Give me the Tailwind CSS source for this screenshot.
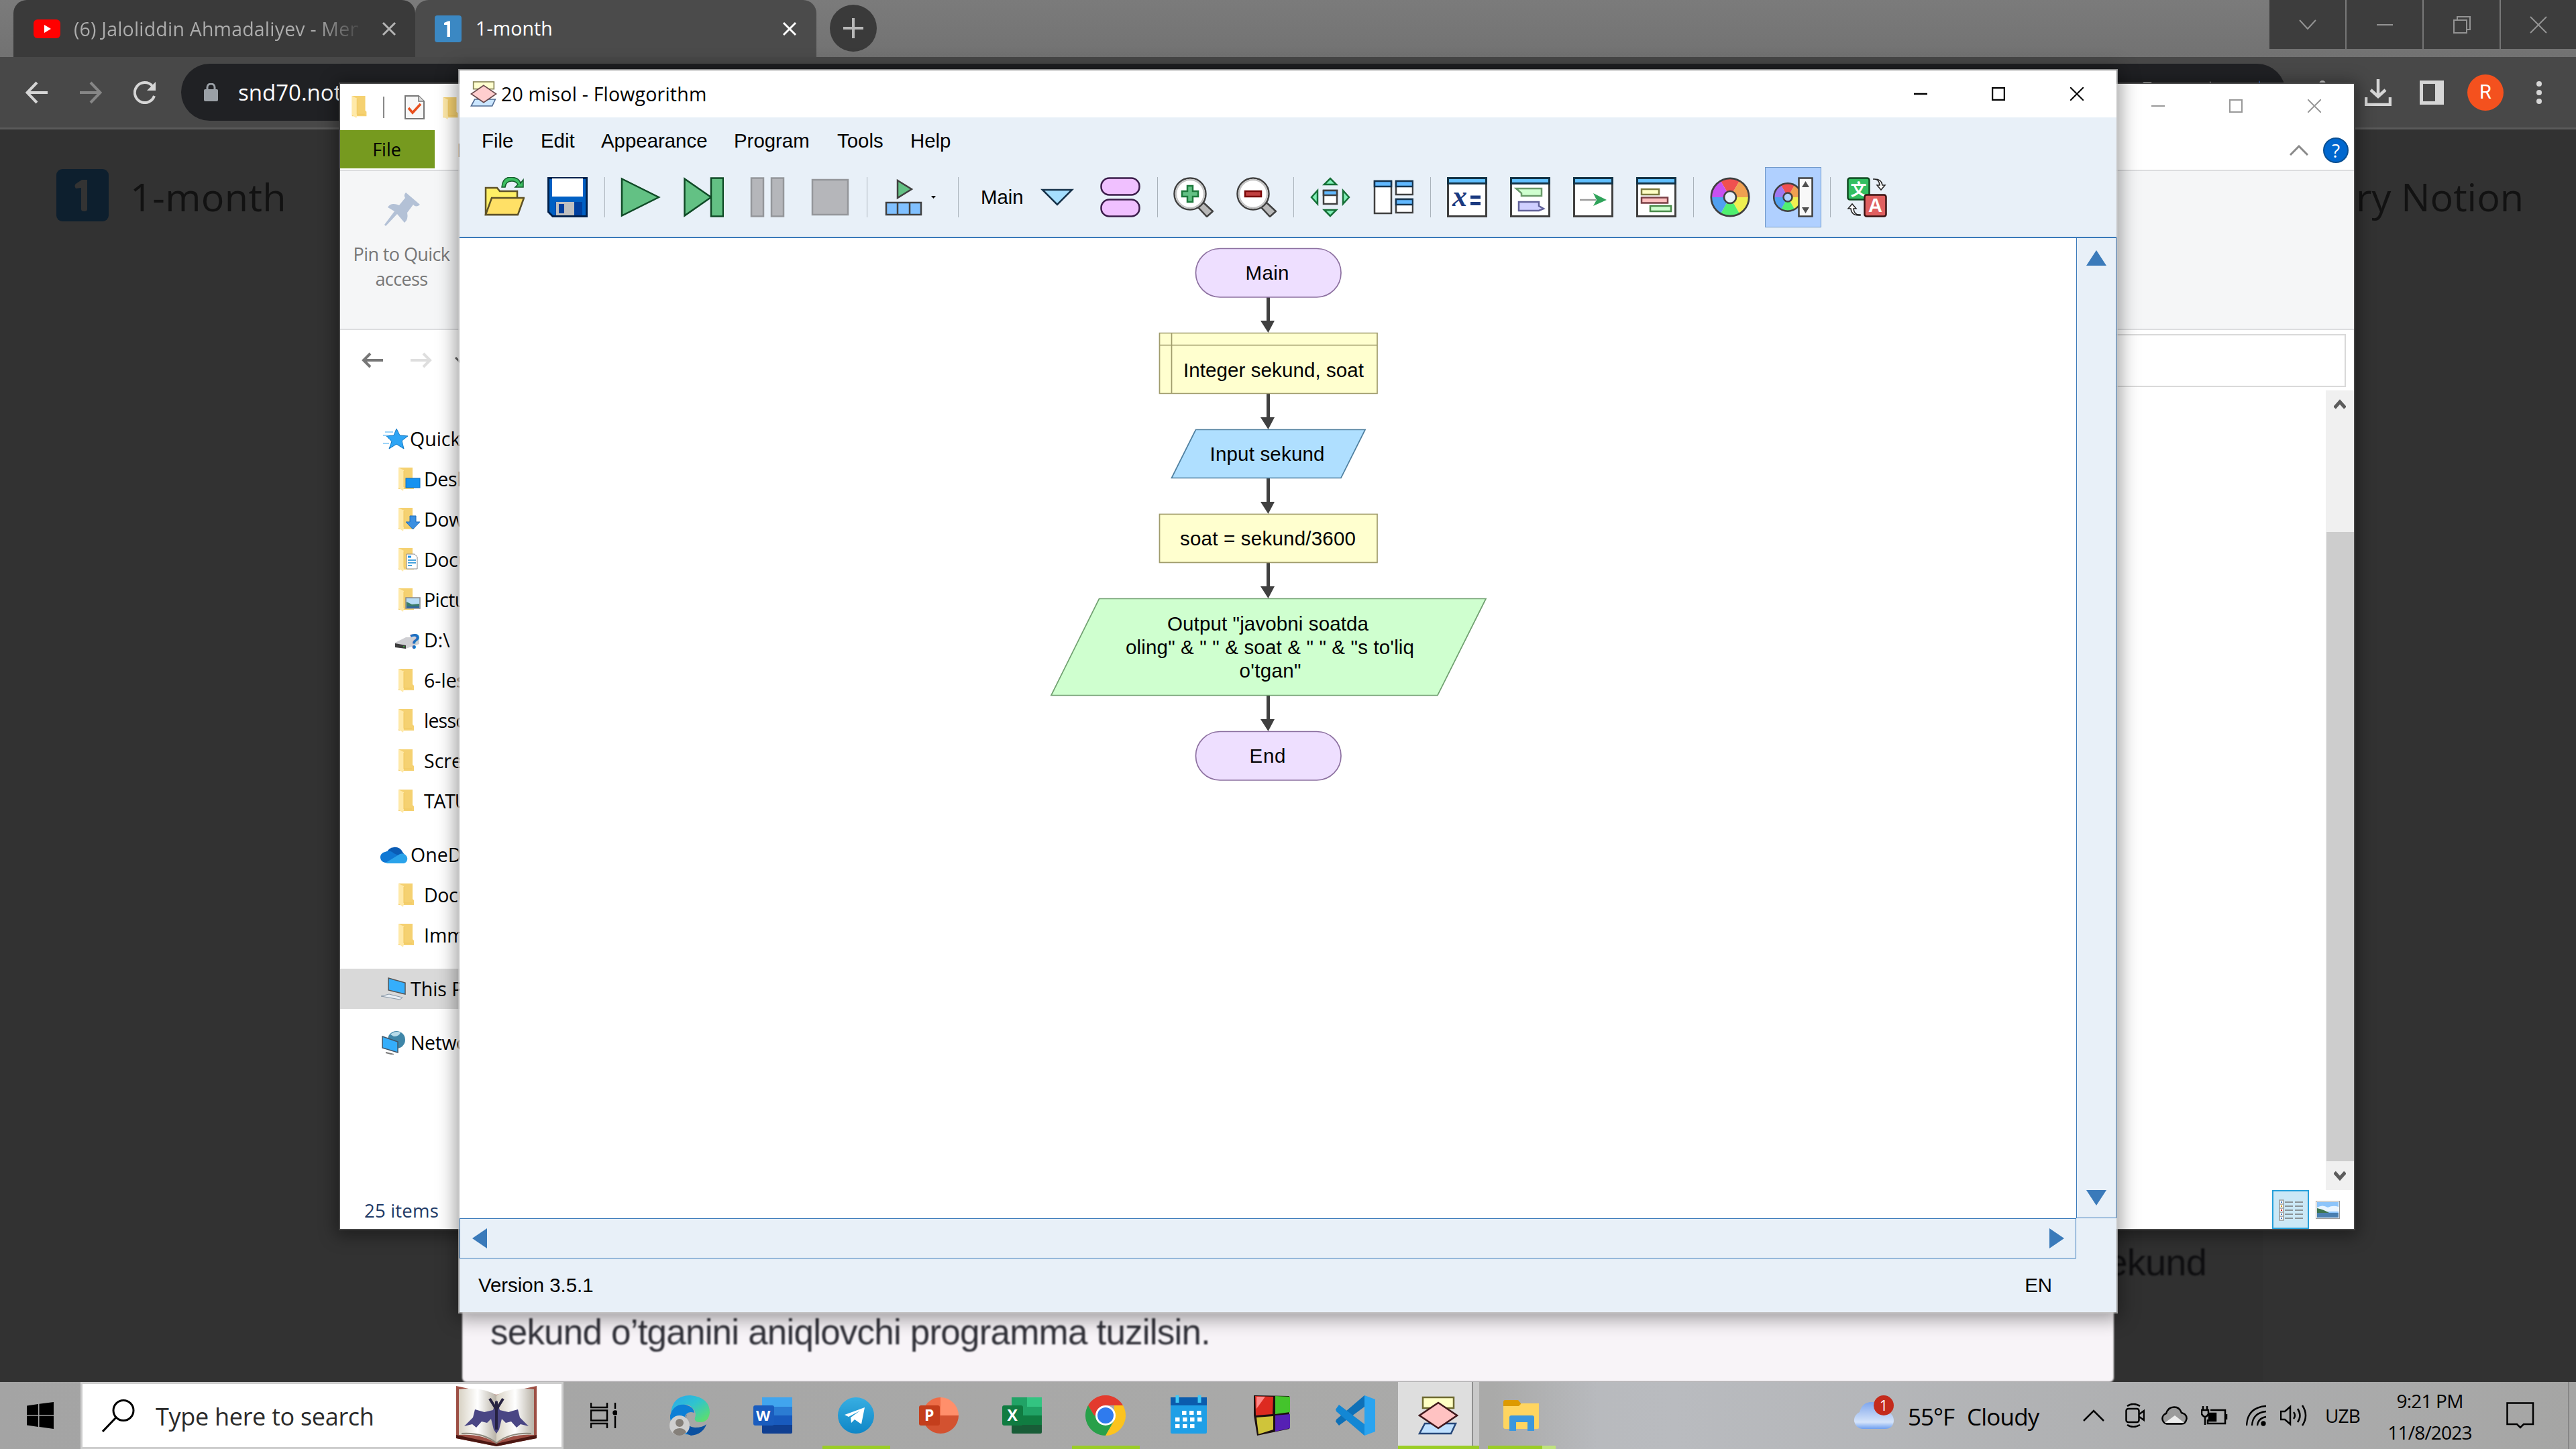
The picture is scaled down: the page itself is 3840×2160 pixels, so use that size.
<!DOCTYPE html>
<html lang="en">
<head>
<meta charset="utf-8">
<title>Desktop</title>
<script src="https://cdn.jsdelivr.net/npm/@tailwindcss/browser@4"></script>
</head>
<body class="relative h-[2160px] w-[3840px] overflow-hidden bg-[#323232] font-['Open_Sans',sans-serif] text-[28.5px] leading-none whitespace-nowrap text-black">

<svg width="0" height="0" class="absolute">
  <defs>
    <linearGradient id="gtg" x1="0" x2="0" y1="0" y2="1"><stop offset="0" stop-color="#37aee2"/><stop offset="1" stop-color="#0f86c6"/></linearGradient>
    <linearGradient id="gcloud" x1="0" x2="0" y1="0" y2="1"><stop offset="0" stop-color="#7ea6ee"/><stop offset=".35" stop-color="#a9c4f2"/><stop offset=".75" stop-color="#d5e4fa"/><stop offset="1" stop-color="#6e9ff0"/></linearGradient>
    <linearGradient id="gedge" x1="0" x2="1" y1="0" y2="1"><stop offset="0" stop-color="#2aa6ee"/><stop offset=".45" stop-color="#2fc3cf"/><stop offset="1" stop-color="#66e35a"/></linearGradient>
    <linearGradient id="gpage" x1="0" x2="1"><stop offset="0" stop-color="#d8d2c4"/><stop offset=".5" stop-color="#ffffff"/><stop offset="1" stop-color="#b8b2a6"/></linearGradient>
    <symbol id="folder" viewBox="0 0 24 36"><path d="M0 1H21V24L23 26V33H0Z" fill="#f5d171"/><path d="M0 1L8 5V31L7 36L0 31Z" fill="#ffe9a8"/><path d="M8 6V30H20" fill="none" stroke="#f0c75f" stroke-width="1"/></symbol>
    <symbol id="flow" viewBox="0 0 60 60"><rect x="7" y="3" width="46" height="16" fill="#ffffc4" stroke="#6e6a30" stroke-width="2.5"/><path d="M10 42H56L49 57H2Z" fill="#bfe0ff" stroke="#27487a" stroke-width="2.5"/><path d="M30 11L58 30L30 49L2 30Z" fill="#ffc2c2" stroke="#40181c" stroke-width="2.5"/></symbol>
    <symbol id="winframe" viewBox="0 0 60 60"><rect x="1.5" y="1.5" width="57" height="57" fill="#fff" stroke="#404040" stroke-width="3"/><rect x="1.5" y="1.5" width="57" height="8" fill="#61c0ff" stroke="#123246" stroke-width="3"/></symbol>
  </defs>
</svg>

<!-- Browser -->
<div class="absolute inset-x-0 top-0 flex h-[2060px] flex-col">
  <div class="flex h-[85px] bg-gradient-to-b from-[#7b7b7b] to-[#727272] pl-5">
    <div class="flex h-[85px] w-[599px] items-center rounded-t-[20px] bg-[#3a3a3a] pl-[30px]">
      <svg class="h-[28px] w-[40px]" viewBox="0 0 40 28"><rect width="40" height="28" rx="6" fill="#f00"/><path d="M16 8L26 14L16 20Z" fill="#fff"/></svg>
      <div class="ml-5 w-[424px] overflow-hidden bg-gradient-to-r from-[#adadad] from-85% to-[#4a4a4a] bg-clip-text leading-[44px] tracking-[0.2px] text-transparent">(6) Jaloliddin Ahmadaliyev - Mentor</div>
      <svg class="ml-[35px] size-[22px]" viewBox="0 0 22 22" stroke="#b4b4b4" stroke-width="3"><path d="M2 2L20 20M20 2L2 20"/></svg>
    </div>
    <div class="flex h-[85px] w-[598px] items-center rounded-t-[20px] bg-[#4b4b4b] pl-[29px] text-white">
      <svg class="size-[40px]" viewBox="0 0 40 40"><rect width="40" height="40" rx="4" fill="#3b88c3"/><path d="M14 11L20 8.500H23V32H18.500V14H14Z" fill="#fff"/></svg>
      <div class="ml-[21px] w-[457px] tracking-[0.1px]">1-month</div>
      <svg class="size-[22px]" viewBox="0 0 22 22" stroke="#fff" stroke-width="3"><path d="M2 2L20 20M20 2L2 20"/></svg>
    </div>
    <svg class="mt-[7px] ml-5 size-[70px]" viewBox="0 0 70 70"><circle cx="35" cy="35" r="35" fill="#3a3a3a"/><path d="M35 20V50M20 35H50" stroke="#b8b8b8" stroke-width="4"/></svg>
    <div class="ml-auto flex h-[73px] gap-[2px]">
      <div class="flex w-[113px] items-center justify-center bg-[#3d3d3d]"><svg class="size-[26px]" viewBox="0 0 26 26" fill="none" stroke="#949494" stroke-width="2"><path d="M1 6L13 19L25 6"/></svg></div>
      <div class="flex w-[113px] items-center justify-center bg-[#3d3d3d]"><svg class="size-[26px]" viewBox="0 0 26 26" fill="none" stroke="#949494" stroke-width="2"><path d="M1 13H25"/></svg></div>
      <div class="flex w-[113px] items-center justify-center bg-[#3d3d3d]"><svg class="size-[26px]" viewBox="0 0 26 26" fill="none" stroke="#949494" stroke-width="2"><path d="M1 6H20V25H1ZM6 6V1H25V20H20"/></svg></div>
      <div class="flex w-[112px] items-center justify-center bg-[#3d3d3d]"><svg class="size-[26px]" viewBox="0 0 26 26" fill="none" stroke="#949494" stroke-width="2"><path d="M1 1L25 25M25 1L1 25"/></svg></div>
    </div>
  </div>
  <div class="flex h-[108px] items-center border-b-[3px] border-[#5a5a5a] bg-[#484848] pl-[38px]">
    <svg class="size-[34px]" viewBox="0 0 34 34" fill="none" stroke="#d6d6d6" stroke-width="4"><path d="M33 17H3M17 2L2.500 17L17 32"/></svg>
    <svg class="ml-[46px] size-[34px]" viewBox="0 0 34 34" fill="none" stroke="#868686" stroke-width="4"><path d="M1 17H31M17 2L31.500 17L17 32"/></svg>
    <svg class="ml-[47px] size-[34px]" viewBox="0 0 34 34"><path d="M28 7A15 15 0 1 0 31 22" fill="none" stroke="#d6d6d6" stroke-width="4"/><path d="M33 1V14H20Z" fill="#d6d6d6"/></svg>
    <div class="ml-[37px] flex h-[85px] w-[3137px] items-center rounded-full bg-[#202124] pl-[34px]">
      <svg class="h-[27px] w-[21px]" viewBox="0 0 21 27"><rect y="9" width="21" height="18" rx="2" fill="#9aa0a6"/><path d="M5 10V6A5.500 5 0 0 1 16 6V10" fill="none" stroke="#9aa0a6" stroke-width="3"/></svg>
      <div class="ml-[30px] w-[2837px] text-[33px] text-white">snd70.notion.site</div>
      <svg class="size-[32px]" viewBox="0 0 32 32" fill="none" stroke="#ccc" stroke-width="5"><circle cx="9" cy="9" r="8"/></svg>
      <svg class="ml-[50px] size-[34px]" viewBox="0 0 34 34" fill="#ccc"><path d="M20 0L30 10L20 18Z"/></svg>
      <svg class="ml-[46px] size-[36px]" viewBox="0 0 36 36" fill="#3b78e7"><path d="M14 0L18 12H30L20 19L24 32L14 24L4 32L8 19L0 12H10Z"/></svg>
    </div>
    <svg class="ml-[42px] size-[36px]" viewBox="0 0 36 36" fill="#ccc"><circle cx="13" cy="5" r="5"/><rect x="0" y="6" width="30" height="28"/></svg>
    <svg class="ml-[40px] h-[40px] w-[40px]" viewBox="0 0 40 40" fill="none" stroke="#d6d6d6" stroke-width="4.500"><path d="M20 0V25M9 16L20 26L31 16M2 27V38H38V27"/></svg>
    <svg class="ml-[42px] h-[36px] w-[36px]" viewBox="0 0 36 36" fill="#d6d6d6"><path d="M0 0H36V36H0ZM5 5V31H23V5Z" fill-rule="evenodd"/></svg>
    <div class="ml-[35px] flex size-[54px] items-center justify-center rounded-full bg-[#f4511e] font-['Roboto',sans-serif] text-[29px] text-white">R</div>
    <svg class="ml-[49px] h-[34px] w-[8px]" viewBox="0 0 8 34" fill="#d6d6d6"><circle cx="4" cy="4" r="4"/><circle cx="4" cy="17" r="4"/><circle cx="4" cy="30" r="4"/></svg>
  </div>
  <div class="flex h-[202px] items-center pr-[78px] pl-[84px] text-[57.5px] text-[#121212]">
    <svg class="mb-[6px] size-[78px]" viewBox="0 0 78 78"><rect width="78" height="78" rx="9" fill="#0d1f2e"/><path d="M29 22L38 16H46V60Q46 63 41.500 63Q37 63 37 60V28L29 29Q26 25 29 22Z" fill="#333"/></svg>
    <div class="ml-[32px] tracking-[0.4px]">1-month</div>
    <div class="ml-auto">ry Notion</div>
  </div>
  <div class="mt-auto flex h-[240px] font-['Liberation_Sans',sans-serif]">
    <div class="ml-[689px] w-[2462px] rounded-b-[6px] bg-[#f8f4f8] pt-[136px] pl-[42px] text-[53px] leading-[60px] tracking-[-0.8px] text-[#303038] blur-[0.8px]">sekund o’tganini aniqlovchi programma tuzilsin.</div>
    <div class="flex w-[222px] items-start justify-end bg-[#303030] pt-[34px]"><div class="mr-[84px] text-[56px] leading-[56px] tracking-[-0.8px] text-[#0e0e10] blur-[1px]">ekund</div></div>
  </div>
</div>

<!-- File Explorer window -->
<div class="absolute top-[125px] left-[507px] flex h-[1707px] w-[3002px] flex-col bg-white shadow-[0_0_0_2px_#454545,0_4px_24px_6px_#00000066]">
  <div class="flex h-[69px] items-center">
    <svg class="mb-[2px] ml-[17px] h-[34px] w-[24px]"><use href="#folder"/></svg>
    <div class="ml-[23px] h-[32px] w-[2px] bg-[#888]"></div>
    <svg class="ml-[30px] h-[36px] w-[30px]" viewBox="0 0 30 36"><path d="M1 1H21L29 9V35H1Z" fill="#f7f7f7" stroke="#777" stroke-width="2"/><path d="M21 1V9H29" fill="#ddd" stroke="#777" stroke-width="1.500"/><path d="M6 19L12 26L24 13" fill="none" stroke="#e84e1c" stroke-width="3.500"/></svg>
    <svg class="mt-[2px] ml-[27px] h-[34px] w-[24px]"><use href="#folder"/></svg>
    <div class="mb-[3px] ml-auto flex">
      <div class="flex w-[116px] justify-center"><svg class="size-[20px]" viewBox="0 0 20 20" stroke="#999" stroke-width="2"><path d="M0 10H20"/></svg></div>
      <div class="flex w-[116px] justify-center"><svg class="size-[20px]" viewBox="0 0 20 20" fill="none" stroke="#999" stroke-width="2"><path d="M1 1H19V19H1Z"/></svg></div>
      <div class="flex w-[118px] justify-center"><svg class="size-[20px]" viewBox="0 0 20 20" stroke="#999" stroke-width="2"><path d="M0 0L20 20M20 0L0 20"/></svg></div>
    </div>
  </div>
  <div class="flex h-[59px] items-center">
    <div class="flex h-[57px] w-[141px] items-center justify-center self-start bg-[#769a1f] pr-[2px] text-[27px]">File</div>
    <div class="ml-[33px] text-[27px]">H</div>
    <svg class="mr-[22px] ml-auto h-[16px] w-[28px]" viewBox="0 0 28 16" fill="none" stroke="#8a8a8a" stroke-width="3"><path d="M1 15L14 2L27 15"/></svg>
    <div class="mr-[8px] flex size-[38px] items-center justify-center rounded-full border-2 border-[#0a4f92] bg-[#0067cf] text-[28px] text-white">?</div>
  </div>
  <div class="h-[239px] border-y-2 border-[#dcdddf] bg-[#f5f6f7] pt-[31px]">
    <div class="flex w-[185px] flex-col items-center text-[27px] text-[#777]">
      <svg class="h-[52px] w-[54px]" viewBox="0 0 54 52" fill="#b3c1d6"><path d="M32 1L53 19Q47 24 43 19L34 31Q36 41 30 46L19 33L2 51L0 49L15 29L5 23Q10 15 22 20L31 9Q28 5 32 1Z"/></svg>
      <div class="mt-[22px] mr-[2px] text-center leading-[37px] tracking-[-0.6px]">Pin to Quick<br>access</div>
    </div>
  </div>
  <div class="flex h-[90px] items-center">
    <svg class="ml-[32px] h-[24px] w-[32px]" viewBox="0 0 32 24" fill="none" stroke="#777" stroke-width="4"><path d="M32 12H3M13 2L3 12L13 22"/></svg>
    <svg class="ml-[41px] h-[24px] w-[32px]" viewBox="0 0 32 24" fill="none" stroke="#dedede" stroke-width="4"><path d="M0 12H29M19 2L29 12L19 22"/></svg>
    <svg class="ml-[34px] h-[10px] w-[16px]" viewBox="0 0 16 10" fill="none" stroke="#666" stroke-width="3"><path d="M1 1L8 8L15 1"/></svg>
    <div class="mr-[12px] ml-[60px] h-[79px] flex-1 border-2 border-[#d9d9d9]"></div>
  </div>
  <div class="flex h-[1192px]">
    <div class="flex w-[300px] flex-col pt-[42px]">
      <div class="flex h-[60px] items-center pl-[64px]"><svg class="h-[32px] w-[38px]" viewBox="0 0 38 32"><path d="M20 1L25 11L37 12L28 19L31 31L20 24L9 31L13 20L5 12L16 11Z" fill="#2ea5f5" stroke="#1279c4"/><path d="M3 6H15M0 11H8M0 23H9" stroke="#7cc6f7" stroke-width="1.500"/></svg><span class="ml-[2px]">Quick access</span></div>
      <div class="flex h-[60px] items-center pl-[87px]"><svg class="h-[36px] w-[34px]" viewBox="0 0 34 36"><use href="#folder" width="24" height="36"/><rect x="11" y="17" width="21" height="14" fill="#1592f0" stroke="#0b6fc2"/></svg><span class="ml-1 tracking-[-0.4px]">Desktop</span></div>
      <div class="flex h-[60px] items-center pl-[87px]"><svg class="h-[36px] w-[34px]" viewBox="0 0 34 36"><use href="#folder" width="24" height="36"/><path d="M17 13H26V22H32L21.500 33L11 22H17Z" fill="#3b8fe0" stroke="#1f6dbb"/></svg><span class="ml-1 tracking-[-0.4px]">Downloads</span></div>
      <div class="flex h-[60px] items-center pl-[87px]"><svg class="h-[36px] w-[34px]" viewBox="0 0 34 36"><use href="#folder" width="24" height="36"/><path d="M12 10H24L28 14V32H12Z" fill="#fff" stroke="#888"/><path d="M14 19H26M14 23H26M14 27H20" stroke="#4aa3dc" stroke-width="2"/><path d="M14 14H19" stroke="#1592f0" stroke-width="3"/></svg><span class="ml-1 tracking-[-0.4px]">Documents</span></div>
      <div class="flex h-[60px] items-center pl-[87px]"><svg class="h-[36px] w-[34px]" viewBox="0 0 34 36"><use href="#folder" width="24" height="36"/><rect x="11" y="15" width="21" height="16" fill="#b7dcf6" stroke="#888" stroke-width="1.500"/><path d="M12 21L20 25L31 24V30H12Z" fill="#3c7d6a"/><path d="M12 28H31V30H12Z" fill="#2d64a0"/></svg><span class="ml-1 tracking-[-0.6px]">Pictures</span></div>
      <div class="flex h-[60px] items-center pl-[82px]"><svg class="h-[32px] w-[38px]" viewBox="0 0 38 32"><path d="M0 20L16 12H36V22L16 29L0 26Z" fill="#cfcfd3"/><path d="M0 21L16 24V29L0 27Z" fill="#3c3c3c"/><circle cx="13" cy="26" r="1" fill="#3c3"/><text x="22" y="29" font-size="30" font-weight="700" fill="#1d6fc0">?</text></svg><span class="ml-[5px]">D:\</span></div>
      <div class="flex h-[60px] items-center pl-[87px]"><svg class="h-[36px] w-[24px]"><use href="#folder"/></svg><span class="ml-[14px]">6-lesson</span></div>
      <div class="flex h-[60px] items-center pl-[87px]"><svg class="h-[36px] w-[24px]"><use href="#folder"/></svg><span class="ml-[14px] tracking-[-0.8px]">lessons</span></div>
      <div class="flex h-[60px] items-center pl-[87px]"><svg class="h-[36px] w-[24px]"><use href="#folder"/></svg><span class="ml-[14px]">Screenshots</span></div>
      <div class="flex h-[60px] items-center pl-[87px]"><svg class="h-[36px] w-[24px]"><use href="#folder"/></svg><span class="ml-[14px] tracking-[-1.2px]">TATU</span></div>
      <div class="mt-5 flex h-[60px] items-center pl-[60px]"><svg class="h-[28px] w-[41px]" viewBox="0 0 41 28"><path d="M9 12A13 13 0 0 1 33 10L36 14L20 22Z" fill="#0a5cb5"/><path d="M9 26A8 8 0 0 1 7 10Q14 6 20 12L33 18L30 26Z" fill="#0f78d4"/><path d="M8 26L26 15Q32 10 37 14Q41 17 40 22Q39 26 35 27H10Z" fill="#2aa3ea"/></svg><span class="ml-[4px]">OneDrive</span></div>
      <div class="flex h-[60px] items-center pl-[87px]"><svg class="h-[36px] w-[24px]"><use href="#folder"/></svg><span class="ml-[14px] tracking-[-0.4px]">Documents</span></div>
      <div class="flex h-[60px] items-center pl-[87px]"><svg class="h-[36px] w-[24px]"><use href="#folder"/></svg><span class="ml-[14px]">Immigration</span></div>
      <div class="mt-5 flex h-[60px] items-center bg-[#d9d9d9] pl-[61px]"><svg class="h-[34px] w-[38px]" viewBox="0 0 38 34"><path d="M11 1L36 8V25L11 19Z" fill="#35aefb" stroke="#555" stroke-width="1.500"/><path d="M0 28L12 25L32 30L28 33Z" fill="#e8eef4" stroke="#8796a5"/></svg><span class="ml-[6px]">This PC</span></div>
      <div class="mt-5 flex h-[60px] items-center pl-[62px]"><svg class="h-[36px] w-[36px]" viewBox="0 0 36 36"><circle cx="22" cy="14" r="13" fill="#3f86a8"/><path d="M13 6Q20 0 28 3Q26 9 18 9Z" fill="#b9dcea"/><path d="M1 9L24 17V33L1 26Z" fill="#35aefb" stroke="#456" stroke-width="1.500"/><path d="M6 33L18 36" stroke="#777" stroke-width="2"/></svg><span class="ml-[7px] tracking-[-0.4px]">Network</span></div>
    </div>
    <div class="ml-auto flex w-[42px] flex-col items-center justify-between bg-[#f0f0f0]">
      <svg class="mt-[12px] h-[16px] w-[18px]" viewBox="0 0 18 16" fill="none" stroke="#5c5c5c" stroke-width="5"><path d="M1 14L9 5L17 14"/></svg>
      <div class="mt-auto h-[938px] w-[41px] bg-[#cdcdcd]"></div>
      <svg class="mt-[14px] mb-[12px] h-[17px] w-[18px]" viewBox="0 0 18 16" fill="none" stroke="#5c5c5c" stroke-width="5"><path d="M1 2L9 11L17 2"/></svg>
    </div>
  </div>
  <div class="flex h-[58px] items-center pl-[36px] text-[#1e3a66]">
    <span class="mt-[3px] text-[27.5px] tracking-[0.2px]">25 items</span>
    <div class="ml-auto flex h-[58px] w-[55px] items-center justify-center border-2 border-[#26a0da] bg-[#cbe8f6]">
      <svg class="mt-[2px] h-[32px] w-[36px]" viewBox="0 0 36 32"><path d="M1 1H7V31H1ZM1 7H7M1 13H7M1 19H7M1 25H7" fill="#fff" stroke="#999" stroke-width="1.500"/><path d="M3 4H5M3 28H5M3 22H5" stroke="#3c7ac0" stroke-width="2"/><path d="M3 10H5" stroke="#c90" stroke-width="2"/><path d="M3 16H5" stroke="#c11" stroke-width="2"/><path d="M9 4H21M24 4H36M9 10H21M24 10H36M9 16H21M24 16H36M9 22H21M24 22H36M9 28H21M24 28H36" stroke="#777" stroke-width="1.300"/></svg>
    </div>
    <svg class="mr-[21px] ml-[10px] h-[27px] w-[36px]" viewBox="0 0 36 27"><rect x=".5" y=".5" width="35" height="26" fill="#fff" stroke="#999"/><rect x="2" y="2" width="32" height="23" fill="#8cc4fa"/><path d="M2 10Q10 5 18 10Q26 6 34 9V16H2Z" fill="#eaf5ff"/><path d="M2 11Q12 13 20 18H2Z" fill="#3d7550"/><path d="M2 18H34V25H2Z" fill="#4a7fb0"/></svg>
  </div>
</div>

<!-- Flowgorithm window -->
<div class="absolute top-[105px] left-[685px] flex h-[1851px] w-[2470px] flex-col bg-[#e8f0f8] font-['Liberation_Sans',sans-serif] text-[29.4px] shadow-[0_0_0_2px_#c8c8c8b0,0_4px_26px_6px_#00000060]">
  <div class="flex h-[70px] items-center bg-white font-['Open_Sans',sans-serif] text-[28.5px]">
    <svg class="ml-[16px] size-[40px] opacity-80"><use href="#flow"/></svg>
    <div class="ml-[6px] tracking-[0.2px]">20 misol - Flowgorithm</div>
    <div class="ml-auto flex">
      <div class="flex w-[116px] justify-center"><svg class="size-[20px]" viewBox="0 0 20 20" stroke="#000" stroke-width="2.500"><path d="M0 10H20"/></svg></div>
      <div class="flex w-[116px] justify-center"><svg class="size-[20px]" viewBox="0 0 20 20" fill="none" stroke="#000" stroke-width="2.500"><path d="M1 1H19V19H1Z"/></svg></div>
      <div class="flex w-[118px] justify-center"><svg class="size-[20px]" viewBox="0 0 20 20" stroke="#000" stroke-width="2"><path d="M0 0L20 20M20 0L0 20"/></svg></div>
    </div>
  </div>
  <div class="flex h-[70px] items-center pl-[33px]">
    <span class="w-[88px]">File</span><span class="w-[90px]">Edit</span><span class="w-[198px]">Appearance</span><span class="w-[154px]">Program</span><span class="w-[109px]">Tools</span><span>Help</span>
  </div>
  <div class="flex h-[110px] items-center border-b-2 border-[#3a7aba] pb-[10px] pl-[37px]">
    <svg class="size-[60px]" viewBox="0 0 60 60" stroke="#5e5228" stroke-width="2.500"><path d="M2 56V16H19L23 21H49V56Z" fill="#fff066"/><path d="M2 56L11 31H59L50 56Z" fill="#ffe066"/><path d="M26 15Q27 0 40 0Q52 1 54 9L58 4V15H46L50 11Q47 6 41 6Q32 6 31 15Z" fill="#3cbf62" stroke="#145c2c" stroke-width="1.500"/></svg>
    <svg class="ml-[34px] size-[60px]" viewBox="0 0 60 60"><path d="M1.500 1.500H58.500V58.500H8L1.500 52Z" fill="#0060c4" stroke="#00214d" stroke-width="3"/><rect x="7" y="2" width="46" height="27" fill="#fff"/><rect x="12" y="37" width="40" height="20" fill="#003f9f"/><rect x="13" y="37" width="27" height="20" fill="#c0c0c0"/><rect x="17" y="40" width="8" height="14" fill="#003f9f"/></svg>
    <div class="mr-[23px] ml-[25px] h-[60px] w-[1px] bg-[#a9b2ba]"></div>
    <svg class="size-[60px]" viewBox="0 0 60 60"><path d="M2 2.500L57 30L2 57.500Z" fill="#63c184" stroke="#0f4a26" stroke-width="2.500"/></svg>
    <svg class="ml-[34px] size-[60px]" viewBox="0 0 60 60" fill="#63c184" stroke="#0f4a26" stroke-width="2.500"><path d="M1.500 2.500L41 30L1.500 57.500Z"/><rect x="41" y="1.500" width="18" height="57"/></svg>
    <svg class="ml-[34px] size-[60px]" viewBox="0 0 60 60" fill="#b5b6ba" stroke="#94969a" stroke-width="2.500"><rect x="7" y="1.500" width="18" height="57"/><rect x="37" y="1.500" width="18" height="57"/></svg>
    <svg class="ml-[34px] size-[60px]" viewBox="0 0 60 60" fill="#b5b6ba" stroke="#94969a" stroke-width="2.500"><rect x="4" y="4" width="53" height="52"/></svg>
    <div class="mx-[25px] h-[60px] w-[1px] bg-[#a9b2ba]"></div>
    <svg class="size-[60px]" viewBox="0 0 60 60" stroke="#404040" stroke-width="2.500"><path d="M20 5L41 18L20 31Z" fill="#63c184"/><path d="M3 38H55V56H3ZM20 38V56M38 38V56" fill="#80c0ff"/></svg>
    <svg class="ml-[10px] h-[4px] w-[7px]" viewBox="0 0 7 4"><path d="M0 0H7L3.500 4Z"/></svg>
    <div class="ml-[33px] h-[60px] w-[1px] bg-[#a9b2ba]"></div>
    <span class="ml-[33px] w-[89px]">Main</span>
    <svg class="h-[27px] w-[50px]" viewBox="0 0 50 27"><path d="M3 2H47L25 24Z" fill="#a5dfff" stroke="#16324a" stroke-width="2.500"/></svg>
    <svg class="ml-[39px] size-[60px]" viewBox="0 0 60 60" fill="#f0c0ff" stroke="#3a1c4a" stroke-width="2.500"><rect x="1.500" y="1.500" width="57" height="25" rx="12"/><rect x="1.500" y="33.500" width="57" height="25" rx="12"/></svg>
    <div class="mr-[23px] ml-[25px] h-[60px] w-[1px] bg-[#a9b2ba]"></div>
    <svg class="size-[60px]" viewBox="0 0 60 60" stroke="#404040" stroke-width="2.500"><path d="M37 45L45 38L59 51L50 59Z" fill="#b8b8b8"/><circle cx="25" cy="25" r="23.500" fill="#fff"/><circle cx="25" cy="25" r="21" fill="none" stroke="#c4c4c4"/><path d="M21 13H29V21H37V29H29V37H21V29H13V21H21Z" fill="#63c184" stroke="#1d7a3c"/></svg>
    <svg class="ml-[34px] size-[60px]" viewBox="0 0 60 60" stroke="#404040" stroke-width="2.500"><path d="M37 45L45 38L59 51L50 59Z" fill="#b8b8b8"/><circle cx="25" cy="25" r="23.500" fill="#fff"/><circle cx="25" cy="25" r="21" fill="none" stroke="#c4c4c4"/><rect x="13" y="21" width="24" height="8" fill="#c04040" stroke="#7a0808"/></svg>
    <div class="mr-[24px] ml-[25px] h-[60px] w-[1px] bg-[#a9b2ba]"></div>
    <svg class="size-[60px]" viewBox="0 0 60 60" fill="#80f0b8" stroke="#177038" stroke-width="2.500"><path d="M30 2L39 11H21ZM30 58L21 49H39ZM2 30L11 20V40ZM58 30L49 20V40Z"/><rect x="20" y="20" width="20" height="20" fill="#fff" stroke="#404040"/><rect x="20" y="20" width="20" height="7" fill="#61b8ff" stroke="#404040"/></svg>
    <svg class="ml-[34px] size-[60px]" viewBox="0 0 60 60" fill="#fff" stroke="#404040" stroke-width="2.500"><path d="M2 6H27V54H2ZM34 6H59V26H34ZM34 33H59V53H34Z"/><path d="M2 6H27V14H2ZM34 6H59V14H34ZM34 33H59V41H34Z" fill="#61b8ff" stroke="#143450"/></svg>
    <div class="mr-[24px] ml-[25px] h-[60px] w-[1px] bg-[#a9b2ba]"></div>
    <svg class="size-[60px]" viewBox="0 0 60 60"><use href="#winframe"/><text x="8" y="43" font-family="Liberation Serif, serif" font-style="italic" font-weight="700" font-size="44" fill="#1b3a80">x</text><path d="M35 30H50M35 39.500H50" stroke="#1b3a80" stroke-width="5"/></svg>
    <svg class="ml-[34px] size-[60px]" viewBox="0 0 60 60"><use href="#winframe"/><path d="M8 19H46V30H16V26Z" fill="#cfffcf" stroke="#6a9a6a" stroke-width="2.500" transform="translate(1,-2)"/><path d="M13 37H43V43L50 47L43 50H13Z" fill="#cfcfff" stroke="#62629a" stroke-width="2.500"/></svg>
    <svg class="ml-[34px] size-[60px]" viewBox="0 0 60 60"><use href="#winframe"/><path d="M10 34H34" stroke="#9c9c9c" stroke-width="2.500"/><path d="M30 24L50 34L30 43L35 34Z" fill="#2fa35a"/></svg>
    <svg class="ml-[34px] size-[60px]" viewBox="0 0 60 60" stroke-width="2.500"><use href="#winframe"/><rect x="8" y="18" width="26" height="8" fill="#ffffc4" stroke="#7c7c40"/><rect x="8" y="30.500" width="39" height="8" fill="#ffc0c0" stroke="#7a4046"/><rect x="21" y="43" width="31" height="8" fill="#cfffcf" stroke="#4a8a4a"/></svg>
    <div class="mr-[24px] ml-[25px] h-[60px] w-[1px] bg-[#a9b2ba]"></div>
    <svg class="size-[60px]" viewBox="-30 -30 60 60"><path d="M0 0L-14 -24.200A28 28 0 0 1 14 -24.200Z" fill="#f05050"/><path d="M0 0L14 -24.200A28 28 0 0 1 28 0Z" fill="#f0a050"/><path d="M0 0H28A28 28 0 0 1 14 24.200Z" fill="#f0f050"/><path d="M0 0L14 24.200A28 28 0 0 1 -14 24.200Z" fill="#50f070"/><path d="M0 0L-14 24.200A28 28 0 0 1 -28 0Z" fill="#50a0f0"/><path d="M0 0H-28A28 28 0 0 1 -14 -24.200Z" fill="#c850f0"/><circle r="28.200" fill="none" stroke="#404040" stroke-width="2.700"/><circle r="9" fill="#e8f0f8" stroke="#404040" stroke-width="2.700"/></svg>
    <div class="ml-[22px] flex h-[90px] w-[84px] items-center justify-center border border-[#6f98c8] bg-[#b0d0ff]">
      <svg class="size-[60px]" viewBox="0 0 60 60"><g transform="translate(22,30)"><path d="M0 0L-10 -18A21 21 0 0 1 10 -18Z" fill="#f05050"/><path d="M0 0L10 -18A21 21 0 0 1 21 0Z" fill="#f0a050"/><path d="M0 0H21A21 21 0 0 1 10 18Z" fill="#f0f050"/><path d="M0 0L10 18A21 21 0 0 1 -10 18Z" fill="#50f070"/><path d="M0 0L-10 18A21 21 0 0 1 -21 0Z" fill="#50a0f0"/><path d="M0 0H-21A21 21 0 0 1 -10 -18Z" fill="#a078f0"/><circle r="20.800" fill="none" stroke="#404040" stroke-width="2.500"/><circle r="6.500" fill="#b0d0ff" stroke="#404040" stroke-width="2.500"/></g><rect x="38.500" y="1.500" width="20" height="57" fill="#f8f8f8" stroke="#404040" stroke-width="2.500"/><path d="M48.500 6L54 15H43ZM48.500 54L43 45H54Z" fill="#505050"/></svg>
    </div>
    <div class="ml-[13px] h-[60px] w-[1px] bg-[#a9b2ba]"></div>
    <svg class="ml-[24px] size-[60px]" viewBox="0 0 60 60"><rect x="1.500" y="1.500" width="32" height="32" rx="3" fill="#32bf60" stroke="#0f4a20" stroke-width="2.500"/><text x="5.500" y="27" font-size="24" font-weight="700" fill="#fff" font-family="Noto Sans CJK SC, sans-serif">文</text><rect x="26.500" y="26.500" width="32" height="32" rx="3" fill="#e06060" stroke="#3a1010" stroke-width="2.500"/><text x="32" y="52" font-size="29" font-weight="700" fill="#fff" font-family="Liberation Sans, sans-serif">A</text><path d="M39 3Q48 2 49 12H45L51 19L57 12H53Q52 2 39 3ZM20 56Q11 57 10 47H14L8 40L2 47H6Q7 58 20 57Z" fill="#fff" stroke="#222" stroke-width="1.500"/></svg>
  </div>
  <div class="flex h-[1461px]">
    <!-- Flowchart canvas -->
    <div class="relative h-full w-[2410px] bg-white">
      <svg class="absolute top-0 left-[855px]" width="700" height="840" viewBox="1540 355 700 840" font-family="Liberation Sans, sans-serif" font-size="29.500" text-anchor="middle">
        <g stroke="#404040" stroke-width="5"><path d="M1890.500 443V480M1890.500 586V625M1890.500 712V750M1890.500 838V876M1890.500 1036V1074"/></g>
        <g fill="#404040"><path d="M1879 478H1900L1890.500 496ZM1879 622H1900L1890.500 640ZM1879 748H1900L1890.500 766ZM1879 874H1900L1890.500 892ZM1879 1072H1900L1890.500 1090Z"/></g>
        <g stroke-width="1.700">
          <rect x="1782.500" y="370.500" width="216.500" height="72.500" rx="36" fill="#eedfff" stroke="#8c70a0"/>
          <path d="M1728.500 496.500H2053V586.500H1728.500ZM1746.500 496V586M1728 514.500H2053" fill="#ffffcf" stroke="#a09c6c"/>
          <path d="M1782.500 640.500H2035L1999 712.500H1746.500Z" fill="#afdfff" stroke="#5080a0"/>
          <rect x="1728.500" y="766.500" width="324.500" height="72" fill="#ffffcf" stroke="#a09c6c"/>
          <path d="M1638.500 892.500H2215L2143 1036.500H1567Z" fill="#cfffcf" stroke="#70a070"/>
          <rect x="1782.500" y="1090.500" width="216.500" height="72.500" rx="36" fill="#eedfff" stroke="#8c70a0"/>
        </g>
        <text x="1889" y="416.500" textLength="65">Main</text>
        <text x="1898.500" y="561.500" textLength="269">Integer sekund, soat</text>
        <text x="1889" y="687" textLength="171">Input sekund</text>
        <text x="1890" y="813" textLength="262">soat = sekund/3600</text>
        <text x="1890" y="940" textLength="300">Output "javobni soatda</text>
        <text x="1893" y="975" textLength="430">oling" &amp; " " &amp; soat &amp; " " &amp; "s to'liq</text>
        <text x="1893.500" y="1010" textLength="92">o'tgan"</text>
        <text x="1889.500" y="1137" textLength="54">End</text>
      </svg>
    </div>
    <div class="flex w-[60px] flex-col items-center justify-between border border-t-0 border-[#3a7aba] pt-[18px] pb-[18px]">
      <svg class="h-[23px] w-[30px]" viewBox="0 0 30 23" fill="#3a7aba"><path d="M15 0L30 23H0Z"/></svg>
      <svg class="h-[23px] w-[30px]" viewBox="0 0 30 23" fill="#3a7aba"><path d="M0 0H30L15 23Z"/></svg>
    </div>
  </div>
  <div class="flex h-[60px] w-[2410px] items-center justify-between border border-[#3a7aba] pr-[17px] pl-[18px]">
    <svg class="h-[30px] w-[22px]" viewBox="0 0 22 30" fill="#3a7aba"><path d="M22 0V30L0 15Z"/></svg>
    <svg class="h-[30px] w-[22px]" viewBox="0 0 22 30" fill="#3a7aba"><path d="M0 0V30L22 15Z"/></svg>
  </div>
  <div class="flex h-[80px] items-center justify-between pr-[96px] pl-[28px]"><span>Version 3.5.1</span><span>EN</span></div>
</div>

<!-- Taskbar -->
<div class="absolute inset-x-0 bottom-0 flex h-[100px] items-center bg-gradient-to-r from-[#a3a3a3] via-[#b9bbbf] via-65% to-[#a5a5a4]">
  <div class="absolute inset-0 bg-gradient-to-r from-[#a4a4a4] from-0% via-[#aaaaa9] via-58% to-transparent to-62%"></div>
  <div class="relative flex h-full w-full items-center">
    <div class="flex w-[120px] justify-center"><svg class="size-[40px]" viewBox="0 0 40 40"><path d="M0 5.500L17 3V19H0ZM18.500 2.800L40 0V19H18.500ZM0 20.500H17V37L0 34.500ZM18.500 20.500H40V40L18.500 37Z"/></svg></div>
    <div class="flex h-full w-[720px] items-center border-[3px] border-[#cdcdcd] bg-white pl-[29px]">
      <svg class="size-[49px]" viewBox="0 0 49 49" fill="none" stroke="#000" stroke-width="3"><circle cx="32" cy="16.500" r="15"/><path d="M21 27L1 48"/></svg>
      <div class="mt-[4px] ml-[31px] w-[448px] text-[36px] tracking-[-0.3px] text-[#2a2a2a]">Type here to search</div>
      <svg class="h-[91px] w-[120px]" viewBox="0 0 120 91"><path d="M0 1L60 14L120 1V79L60 91L0 79Z" fill="#9d4f44"/><path d="M0 74L60 87L120 74V79L60 91L0 79Z" fill="#4b1712"/><path d="M4 6Q40 2 60 15V87Q40 72 4 74Z" fill="url(#gpage)"/><path d="M116 6Q80 2 60 15V87Q80 72 116 74Z" fill="url(#gpage)"/><path d="M8 72Q40 70 60 86Q80 70 112 72" fill="none" stroke="#8d877b" stroke-width="2"/><path d="M60 22L65 37L78 40L92 36L95 48L108 61L96 58L90 63L82 54L74 56L68 50L64 66L60 72L56 66L52 50L46 56L38 54L30 63L24 58L12 61L25 48L28 36L42 40L55 37Z" fill="#4a4684"/><path d="M50 20L60 36L70 20M60 24V66" stroke="#262240" stroke-width="4" fill="none"/></svg>
    </div>
    <div class="flex w-[126px] justify-center pr-[6px]"><svg class="h-[38px] w-[40px]" viewBox="0 0 40 38" fill="none" stroke="#000" stroke-width="2.500"><path d="M1 0V7H25V0M1 38V31H25V38M1 11.500H25V26.500H1ZM37 0V9M37 20V38"/><circle cx="37" cy="15" r="2.500" fill="#000"/></svg></div>
    <div class="flex h-full w-[124px] items-center justify-center"><svg class="size-[60px]" viewBox="0 0 60 60"><path d="M2 26Q5 0 31 0Q60 3 60 26Q58 40 46 40Q36 40 38 33Q42 22 28 14Q10 12 2 26Z" fill="url(#gedge)"/><path d="M1 30Q6 12 24 14Q36 17 37 26Q24 22 22 36Q22 52 36 58Q6 62 1 34Z" fill="#0c7fd6"/><path d="M26 28Q20 46 38 48Q50 48 55 43Q50 58 32 60Q14 54 26 28Z" fill="#0b50a0"/><circle cx="15" cy="45" r="15" fill="#cfcfcf"/><circle cx="15" cy="41" r="6" fill="#85807a"/><path d="M5 55Q8 49 15 49Q22 49 25 55Q21 60 15 60Q9 60 5 55Z" fill="#85807a"/></svg></div>
    <div class="flex h-full w-[124px] items-center justify-center"><svg class="size-[60px]" viewBox="0 0 60 60"><rect x="14" y="3" width="45" height="54" rx="2" fill="#103f91"/><path d="M14 3H59V17H14Z" fill="#41a5ee"/><path d="M14 17H59V30H14Z" fill="#2b7cd3"/><path d="M14 30H59V44H14Z" fill="#185abd"/><rect x="1" y="15" width="31" height="30" rx="3" fill="#1a5cbe"/><text x="5" y="38" font-size="22" font-weight="700" fill="#fff">W</text></svg></div>
    <div class="relative flex h-full w-[124px] items-center justify-center"><svg class="size-[54px]" viewBox="0 0 54 54"><circle cx="27" cy="27" r="27" fill="url(#gtg)"/><path d="M10 26L40 15L35 40L25 33L20 38L19 30L33 20L16 29Z" fill="#fff"/></svg><div class="absolute bottom-0 h-[5px] w-[101px] bg-[#9acd26]"></div></div>
    <div class="flex h-full w-[124px] items-center justify-center"><svg class="size-[60px]" viewBox="0 0 60 60"><path d="M32 3A27 27 0 0 0 5 30H32Z" fill="#ed6c47"/><path d="M32 3A27 27 0 0 1 59 30H32Z" fill="#ff8f6b"/><path d="M5 30A27 27 0 0 0 59 30Z" fill="#d35230"/><rect x="0" y="15" width="31" height="30" rx="3" fill="#c43e1c"/><text x="8" y="38" font-size="23" font-weight="700" fill="#fff">P</text></svg></div>
    <div class="flex h-full w-[124px] items-center justify-center"><svg class="size-[60px]" viewBox="0 0 60 60"><rect x="14" y="3" width="45" height="54" rx="2" fill="#185c37"/><path d="M14 3H37V17H14Z" fill="#21a366"/><path d="M37 3H59V17H37Z" fill="#33c481"/><path d="M14 17H59V30H14Z" fill="#21a366"/><path d="M14 30H59V44H14Z" fill="#107c41"/><rect x="0" y="15" width="31" height="30" rx="3" fill="#107c41"/><text x="7.500" y="38" font-size="23" font-weight="700" fill="#fff">X</text></svg></div>
    <div class="relative flex h-full w-[124px] items-center justify-center"><svg class="size-[60px]" viewBox="0 0 60 60"><path d="M30 15H56A30 30 0 0 0 4 15L17 37.500Z" fill="#e33b2e"/><path d="M4 15A30 30 0 0 0 30 60L43 37.500L30 30H13Z" fill="#28a04a"/><path d="M56 15A30 30 0 0 1 30 60L43 37.500L43 15Z" fill="#fcc31e"/><circle cx="30" cy="30" r="15" fill="#fff"/><circle cx="30" cy="30" r="12" fill="#2f7bee"/></svg><div class="absolute bottom-0 h-[5px] w-[101px] bg-[#9acd26]"></div></div>
    <div class="flex h-full w-[124px] items-center justify-center"><svg class="size-[60px]" viewBox="0 0 60 60"><rect x="3" y="3" width="54" height="54" rx="2" fill="#1f9fe6"/><path d="M3 3H57V15H3Z" fill="#0b5cad"/><path d="M13 0V11M46 0V11" stroke="#41c8f5" stroke-width="5"/><path d="M20 26H50M10 36H50M10 46H40" stroke="#fff" stroke-width="6" stroke-dasharray="6.500 4.500"/></svg></div>
    <div class="flex h-full w-[124px] items-center justify-center"><svg class="size-[60px]" viewBox="0 0 60 60"><path d="M3 0L56 1V50L8 60L3 30Z" fill="#1c1010"/><path d="M5 1L32 2L31 28L6 30Z" fill="#dd2a20"/><path d="M35 1L57 2V25L35 28Z" fill="#44c42c"/><path d="M7 33L32 31V51L10 58Z" fill="#cfc43a"/><path d="M35 30L57 28V49L35 54Z" fill="#5620b4"/><path d="M7 2H20L7 20Z" fill="#f88"/></svg></div>
    <div class="flex h-full w-[124px] items-center justify-center"><svg class="size-[60px]" viewBox="0 0 60 60"><path d="M1 39L6 45L44 17V0L2 36Z" fill="#0e70b7"/><path d="M1 21L6 14L44 43V60L2 24Z" fill="#1387d4"/><path d="M44 0L60 6V54L44 60Z" fill="#2aa4f0"/></svg></div>
    <div class="relative flex h-full w-[124px] items-center justify-center">
      <div class="absolute inset-y-0 left-[2px] w-[112px] border-r-2 border-[#8f8f8f] bg-[#dedede]"></div><div class="absolute inset-y-0 left-[114px] w-[9px] bg-[#c9c9c9]"></div><div class="absolute bottom-0 left-[2px] h-[5px] w-[121px] bg-[#9acd26]"></div>
      <svg class="relative size-[60px]"><use href="#flow"/></svg>
    </div>
    <div class="relative flex h-full w-[124px] items-center justify-center"><svg class="h-[46px] w-[54px]" viewBox="0 0 54 46"><path d="M0 3Q0 0 3 0H22L26 5V10H0Z" fill="#dd9a00"/><path d="M0 9H23L27 5H53V42Q53 43 50 43H3Q0 43 0 40Z" fill="#ffd560"/><path d="M9 46V26Q9 23 12 23H43Q46 23 46 26V46H36V33H19V46Z" fill="#3c97dd"/></svg><div class="absolute bottom-0 left-[12px] h-[5px] w-[101px] bg-gradient-to-r from-[#9acd26] from-80% to-[#bfe37c] to-80%"></div></div>
    <div class="ml-auto flex h-full items-center">
      <div class="relative"><svg class="h-[40px] w-[62px]" viewBox="0 0 62 40"><path d="M14 40A13 13 0 0 1 10 15Q14 0 28 0Q43 0 46 14Q61 15 61 28Q60 40 48 40Z" fill="url(#gcloud)"/></svg><div class="absolute top-[-10px] right-[1px] flex size-[30px] items-center justify-center rounded-full bg-[#c42b1c] text-[21px] text-white">1</div></div>
      <span class="mt-[2px] ml-[20px] w-[88px] text-[35px] tracking-[-1px]">55°F</span><span class="mt-[2px] w-[173px] text-[35px] tracking-[-0.8px]">Cloudy</span>
      <svg class="h-[18px] w-[32px]" viewBox="0 0 32 18" fill="none" stroke="#000" stroke-width="2.500"><path d="M1 17L16 2L31 17"/></svg>
      <svg class="ml-[31px] h-[36px] w-[29px]" viewBox="0 0 29 36" fill="none" stroke="#000" stroke-width="2.500"><rect x="1.500" y="8" width="19" height="20" rx="3"/><path d="M21 16L28 11V25L21 20M3 4Q12 -2 22 4M3 32Q12 38 22 32"/></svg>
      <svg class="ml-[24px] h-[28px] w-[40px]" viewBox="0 0 40 28" stroke="#000" stroke-width="2.500"><path d="M9 26.500A8 8 0 0 1 8 11Q11 1.500 20 1.500Q28 1.500 31 10Q39 12 38.500 19Q37 26.500 31 26.500Z" fill="#9b9b9b"/><path d="M6 25L21 14L35 25Z" fill="#ececec" stroke="none"/></svg>
      <svg class="ml-[20px] h-[28px] w-[40px]" viewBox="0 0 40 28" fill="none" stroke="#000" stroke-width="2.500"><path d="M14 6H36V26H10V20M38 12V20M3 0V6M9 0V6M1 6H11V12Q6 20 1 12ZM6 15V28"/><path d="M12 11H22V22H12Z" fill="#000"/></svg>
      <svg class="ml-[27px] h-[32px] w-[31px]" viewBox="0 0 31 32" fill="none" stroke="#000" stroke-width="2.300"><path d="M1 31Q2 4 30 2M9 31Q10 12 30 10M17 31Q18 20 30 18"/><circle cx="26" cy="28" r="2.500" fill="#000"/></svg>
      <svg class="ml-[20px] h-[36px] w-[42px]" viewBox="0 0 42 36" fill="none" stroke="#000" stroke-width="2.500"><path d="M1 12H7L15 5V31L7 24H1ZM20 13Q24 18 20 23M26 8Q33 18 26 28M33 3Q43 18 33 33"/></svg>
      <span class="ml-[25px] w-[79px] text-[28px] tracking-[-0.8px]">UZB</span>
      <div class="mt-[4px] w-[154px] text-center text-[28px] leading-[47px] tracking-[-0.8px]">9:21 PM<br>11/8/2023</div>
      <svg class="ml-[37px] h-[40px] w-[42px]" viewBox="0 0 42 40" fill="none" stroke="#000" stroke-width="2.500"><path d="M1.500 1.500H40V33H26L21 38L16 33H1.500Z"/></svg>
      <div class="mr-[10px] ml-[50px] h-full w-[2px] bg-[#868686]"></div>
    </div>
  </div>
</div>
</body>
</html>
